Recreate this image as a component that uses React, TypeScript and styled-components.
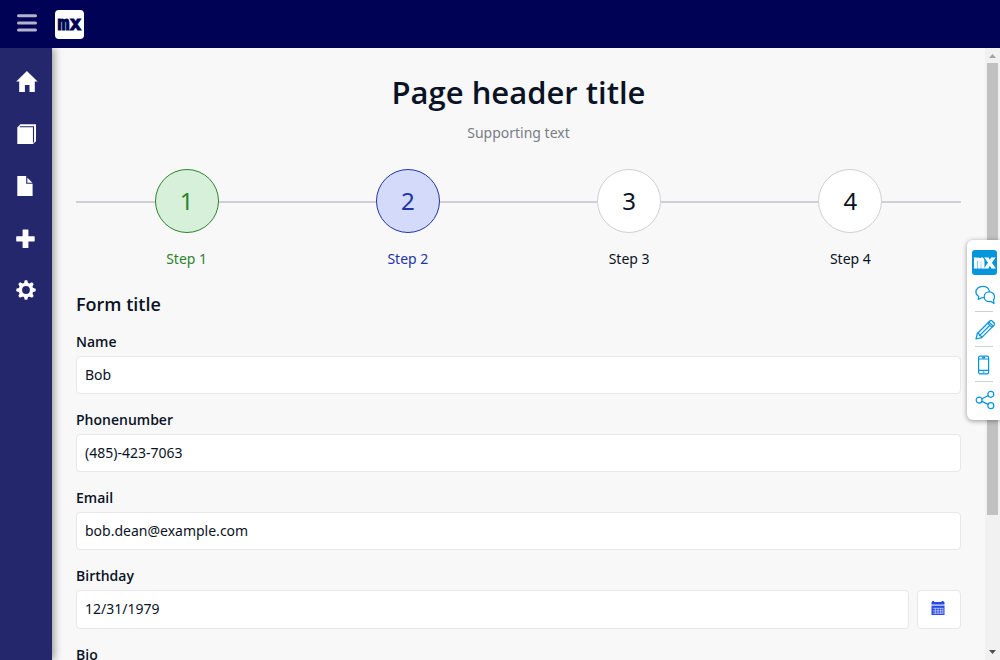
import React from 'react';
import styled, { createGlobalStyle, css } from 'styled-components';

const GlobalStyle = createGlobalStyle`
  *, *::before, *::after { box-sizing: border-box; }
  html, body { margin: 0; }
  body {
    background: #f8f8f8;
    color: #0a1325;
    font-family: "Noto Sans", "Open Sans", sans-serif;
    font-size: 14px;
    line-height: 20px;
  }
`;

const Shell = styled.div`
  display: flex;
  flex-direction: column;
  height: 100vh;
  overflow: hidden;
`;

const TopBar = styled.header`
  display: flex;
  align-items: center;
  flex: none;
  gap: 18px;
  height: 48px;
  padding: 0 17px;
  background: #000256;
  z-index: 2;
`;

const MenuButton = styled.button`
  display: flex;
  padding: 0;
  border: 0;
  background: none;
  cursor: pointer;
`;

const Logo = styled.a<{ $size: number; $inverse?: boolean }>`
  display: flex;
  align-items: center;
  justify-content: center;
  flex: none;
  width: ${(p) => p.$size}px;
  height: ${(p) => p.$size}px;
  border-radius: ${(p) => (p.$inverse ? 3 : 4)}px;
  background: ${(p) => (p.$inverse ? '#0595db' : '#fff')};
  color: ${(p) => (p.$inverse ? '#fff' : '#000256')};
  font-family: "DejaVu Sans Mono", monospace;
  font-size: ${(p) => (p.$inverse ? 18 : 20)}px;
  font-weight: 700;
  line-height: 20px;
  padding-bottom: 2px;
  -webkit-text-stroke: 1px currentColor;
  text-decoration: none;
`;

const Body = styled.div`
  display: flex;
  flex: 1;
  min-height: 0;
`;

const Sidebar = styled.nav`
  display: flex;
  flex-direction: column;
  flex: none;
  width: 52px;
  padding-top: 8px;
  background: #24276c;
  box-shadow: 2px 0 8px rgba(0, 0, 0, 0.4);
  z-index: 1;
`;

const NavLink = styled.a`
  display: flex;
  align-items: center;
  justify-content: center;
  height: 52px;
  color: #fff;
`;

const Main = styled.main`
  flex: 1;
  min-width: 0;
  overflow: hidden;
  padding: 24px;
`;

const PageHeader = styled.header`
  text-align: center;
  margin-bottom: 26px;
`;

const semibold = css`
  font-family: "Open Sans", "Noto Sans", sans-serif;
  font-weight: 600;
`;

const PageTitle = styled.h1`
  ${semibold}
  margin: 0 0 11px;
  font-size: 31px;
  line-height: 40px;
`;

const Supporting = styled.p`
  margin: 0;
  color: #787d87;
`;

const Steps = styled.ol`
  display: flex;
  margin: 0 0 23px;
  padding: 0;
  list-style: none;
`;

type StepState = 'done' | 'current' | 'todo';

const stepColors = {
  done: css`
    --ink: #2d832d;
    --edge: #2d832d;
    --fill: #d7f0d9;
  `,
  current: css`
    --ink: #2036a5;
    --edge: #2036a5;
    --fill: #d3dafa;
  `,
  todo: css`
    --ink: #0a1325;
    --edge: #ced0d3;
    --fill: #fff;
  `,
};

const Step = styled.li<{ $state: StepState }>`
  ${(p) => stepColors[p.$state]}
  flex: 1;
  text-align: center;
  color: var(--ink);
`;

const StepTrack = styled.div`
  display: flex;
  align-items: center;
  margin-bottom: 16px;

  &::before,
  &::after {
    content: '';
    flex: 1;
    height: 2px;
    margin-top: 2px;
    background: #ced0d3;
  }
`;

const StepCircle = styled.span`
  display: flex;
  align-items: center;
  justify-content: center;
  width: 64px;
  height: 64px;
  border: 1px solid var(--edge);
  border-radius: 50%;
  background: var(--fill);
  font-size: 24px;
  line-height: 32px;
`;

const FormTitle = styled.h2`
  ${semibold}
  margin: 0 0 16px;
  font-size: 18px;
  line-height: 24px;
`;

const Field = styled.div`
  margin-bottom: 16px;
`;

const Label = styled.label`
  ${semibold}
  display: block;
  margin-bottom: 4px;
`;

const control = css`
  display: block;
  border: 1px solid #e7e7e9;
  border-radius: 4px;
  background: #fff;
  color: #0a1325;
  font: inherit;
`;

const Input = styled.input`
  ${control}
  width: 100%;
  min-width: 0;
  height: 38px;
  padding: 7px 8px 9px;
`;

const TextArea = styled.textarea`
  ${control}
  width: 100%;
  padding: 8px;
`;

const DateRow = styled.div`
  display: flex;
  gap: 8px;

  & > * {
    height: 39px;
  }
`;

const IconButton = styled.button`
  ${control}
  display: flex;
  align-items: center;
  justify-content: center;
  flex: none;
  width: 44px;
  padding: 0 2px 3px 0;
  color: #264ae5;
  cursor: pointer;
`;

const ScrollBar = styled.div`
  display: flex;
  flex-direction: column;
  flex: none;
  width: 15px;
  background: #f1f1f1;
`;

const ScrollArrow = styled.svg`
  display: block;
  flex: none;
  width: 15px;
  height: 15px;
`;

const ScrollTrack = styled.div`
  flex: 1;
  padding: 0 2px;
`;

const ScrollThumb = styled.div`
  height: 77.7%;
  background: #c1c1c1;
`;

const ToolPanel = styled.aside`
  position: fixed;
  top: 50%;
  right: 0;
  transform: translateY(-50%);
  display: flex;
  flex-direction: column;
  align-items: center;
  width: 33px;
  padding: 10px 0 4px 2px;
  border-radius: 6px 0 0 6px;
  background: #fff;
  box-shadow: 0 1px 5px rgba(0, 0, 0, 0.4);
  z-index: 3;
`;

const ToolList = styled.div`
  display: flex;
  flex-direction: column;
  margin-top: 2px;
`;

const ToolButton = styled.button`
  display: flex;
  align-items: center;
  justify-content: center;
  width: 20px;
  height: 34px;
  padding: 2px 0 0;
  border: 0;
  background: none;
  color: #0595db;
  cursor: pointer;
`;

const ToolDivider = styled.hr`
  width: 18px;
  height: 1px;
  margin: 0;
  border: 0;
  background: #ced0d3;
`;

const MenuIcon = () => (
  <svg width="20" height="20" viewBox="0 0 20 20" stroke="#b3b3cc" strokeWidth="3" strokeLinecap="round" aria-hidden="true">
    <path d="M1.5 1.8h17M1.5 9h17M1.5 16h17" />
  </svg>
);

const HomeIcon = () => (
  <svg width="24" height="22" viewBox="0 0 24 22" fill="currentColor" aria-hidden="true">
    <path d="M12.9 0 23.6 10.6h-2.8V20.9h-5.3V14.1h-4.6v6.8H5.2V10.6H2.2z" />
  </svg>
);

const DuplicateIcon = () => (
  <svg width="20" height="20" viewBox="0 0 20 20" aria-hidden="true">
    <path fill="currentColor" d="M1.3 3.4 4.4.3H20V17.2L17 20H1.3z" />
    <path fill="none" stroke="#24276c" strokeWidth="1.1" d="M3.8 2.7H17.5V18.6" />
  </svg>
);

const FileIcon = () => (
  <svg width="20" height="20" viewBox="0 0 20 20" fill="currentColor" aria-hidden="true">
    <path d="M1.3 0h8.9v7.8h6.4V20H1.3z" />
    <path d="M11.4 1.8 16.4 6.8h-5z" />
  </svg>
);

const PlusIcon = () => (
  <svg width="20" height="20" viewBox="0 0 20 20" fill="currentColor" aria-hidden="true">
    <path d="M7.2 1.4h4.6a.6.6 0 0 1 .6.6v6.2h5.7a.6.6 0 0 1 .6.6v4a.6.6 0 0 1-.6.6h-5.7v6a.6.6 0 0 1-.6.6H7.2a.6.6 0 0 1-.6-.6v-6H.8a.6.6 0 0 1-.6-.6v-4a.6.6 0 0 1 .6-.6h5.8V2a.6.6 0 0 1 .6-.6z" />
  </svg>
);

const GearIcon = () => (
  <svg width="20" height="20" viewBox="0 0 20 20" aria-hidden="true">
    <g fill="currentColor">
      {[0, 45, 90, 135].map((angle) => (
        <path key={angle} transform={`rotate(${angle} 10 10)`} d="M8.8 .3h2.4l1 3.2v13l-1 3.2H8.8l-1-3.2v-13z" />
      ))}
    </g>
    <circle cx="10" cy="10" r="5.6" fill="#24276c" stroke="currentColor" strokeWidth="3.4" />
  </svg>
);

const CalendarIcon = () => (
  <svg width="14" height="14" viewBox="0 0 14 14" aria-hidden="true">
    <path fill="currentColor" d="M1.2 0h2v1h7.4V0h2v1H13.5v2.6H.5V1h.7z" />
    <path fill="currentColor" fillOpacity=".3" d="M.5 3.6h13v1.2H.5z" />
    <path fill="currentColor" d="M.5 4.8h13V14H.5z" />
    <path stroke="#fff" strokeOpacity=".75" strokeWidth=".7" d="M1.8 7.3h10.4M1.8 9.8h10.4M1.8 12.2h10.4M4.3 6.9v6M7 6.9v6M9.7 6.9v6M12 6.9v6" />
  </svg>
);

const lineIcon = {
  width: 20,
  height: 20,
  viewBox: '0 0 20 20',
  fill: 'none',
  stroke: 'currentColor',
  strokeWidth: 1.2,
  strokeLinejoin: 'round' as const,
  strokeLinecap: 'round' as const,
  'aria-hidden': true,
};

const ChatIcon = () => (
  <svg {...lineIcon}>
    <path d="M9.3 12.6c-.8.2-1.6.2-2.5.1L3.2 14.4l.6-2.9C1.9 10.5.9 9 .9 7.1.9 3.8 3.8 1.3 7.6 1.3c3.6 0 6.4 2.1 6.8 5.1" />
    <path d="M14.3 6.9c-2.9 0-5.1 2.1-5.1 4.9s2.2 4.9 5.1 4.9c.6 0 1.2-.1 1.7-.3l3 2.1-.5-3.6c.6-.8 1-1.9 1-3.1 0-2.8-2.3-4.9-5.2-4.9z" />
  </svg>
);

const PencilIcon = () => (
  <svg {...lineIcon}>
    <path d="M1 19l1.4-5.5L13.9 2l1-1c.7-.6 1.6-.6 2.2 0l2 2c.6.7.6 1.5 0 2.2l-1 1L6.6 17.6z" />
    <path d="M12.7 3.2l4.2 4.2M13.9 2l4.2 4.2M2.4 13.5l1.7.3.5 1.8 1.7.4.3 1.6M14.6 5.5 4.8 15.3" />
  </svg>
);

const PhoneIcon = () => (
  <svg {...lineIcon}>
    <rect x="3.6" y="1.2" width="10" height="17.6" rx="1.6" />
    <path d="M3.6 4h10M3.6 15.4h10M7.4 2.6h2.4M8.2 17.1h.8" />
  </svg>
);

const ShareIcon = () => (
  <svg {...lineIcon}>
    <circle cx="4.2" cy="10.1" r="3" />
    <circle cx="15.8" cy="4.3" r="3" />
    <circle cx="15.8" cy="15.7" r="3" />
    <path d="M6.9 8.8l6.2-3.1M6.9 11.4l6.2 3" />
  </svg>
);

const navItems = [
  { label: 'Home', Icon: HomeIcon },
  { label: 'Pages', Icon: DuplicateIcon },
  { label: 'Document', Icon: FileIcon },
  { label: 'Add', Icon: PlusIcon },
  { label: 'Settings', Icon: GearIcon },
];

const steps: StepState[] = ['done', 'current', 'todo', 'todo'];

const fields = [
  { id: 'name', label: 'Name', type: 'text', value: 'Bob' },
  { id: 'phone', label: 'Phonenumber', type: 'tel', value: '(485)-423-7063' },
  { id: 'email', label: 'Email', type: 'email', value: 'bob.dean@example.com' },
];

const tools = [
  { label: 'Feedback', Icon: ChatIcon },
  { label: 'Edit', Icon: PencilIcon },
  { label: 'Device preview', Icon: PhoneIcon },
  { label: 'Share', Icon: ShareIcon },
];

export default function App() {
  return (
    <Shell>
      <GlobalStyle />
      <TopBar>
        <MenuButton type="button" aria-label="Toggle menu">
          <MenuIcon />
        </MenuButton>
        <Logo href="#" $size={29}>mx</Logo>
      </TopBar>

      <Body>
        <Sidebar aria-label="Main">
          {navItems.map(({ label, Icon }) => (
            <NavLink key={label} href="#" aria-label={label}>
              <Icon />
            </NavLink>
          ))}
        </Sidebar>

        <Main>
          <PageHeader>
            <PageTitle>Page header title</PageTitle>
            <Supporting>Supporting text</Supporting>
          </PageHeader>

          <Steps>
            {steps.map((state, i) => (
              <Step key={i} $state={state} aria-current={state === 'current' ? 'step' : undefined}>
                <StepTrack>
                  <StepCircle>{i + 1}</StepCircle>
                </StepTrack>
                {`Step ${i + 1}`}
              </Step>
            ))}
          </Steps>

          <form>
            <FormTitle>Form title</FormTitle>
            {fields.map((f) => (
              <Field key={f.id}>
                <Label htmlFor={f.id}>{f.label}</Label>
                <Input id={f.id} type={f.type} defaultValue={f.value} />
              </Field>
            ))}
            <Field>
              <Label htmlFor="birthday">Birthday</Label>
              <DateRow>
                <Input id="birthday" type="text" defaultValue="12/31/1979" />
                <IconButton type="button" aria-label="Open calendar">
                  <CalendarIcon />
                </IconButton>
              </DateRow>
            </Field>
            <Field>
              <Label htmlFor="bio">Bio</Label>
              <TextArea id="bio" rows={5} />
            </Field>
          </form>
        </Main>

        <ScrollBar aria-hidden="true">
          <ScrollArrow viewBox="0 0 15 15">
            <path d="M4 10h7L7.5 6z" fill="#a3a3a3" />
          </ScrollArrow>
          <ScrollTrack>
            <ScrollThumb />
          </ScrollTrack>
          <ScrollArrow viewBox="0 0 15 15">
            <path d="M4 5h7L7.5 9z" fill="#505050" />
          </ScrollArrow>
        </ScrollBar>
      </Body>

      <ToolPanel aria-label="Tools">
        <Logo href="#" $size={25} $inverse>mx</Logo>
        <ToolList>
          {tools.map(({ label, Icon }, i) => (
            <React.Fragment key={label}>
              {i > 0 && <ToolDivider />}
              <ToolButton type="button" aria-label={label}>
                <Icon />
              </ToolButton>
            </React.Fragment>
          ))}
        </ToolList>
      </ToolPanel>
    </Shell>
  );
}
